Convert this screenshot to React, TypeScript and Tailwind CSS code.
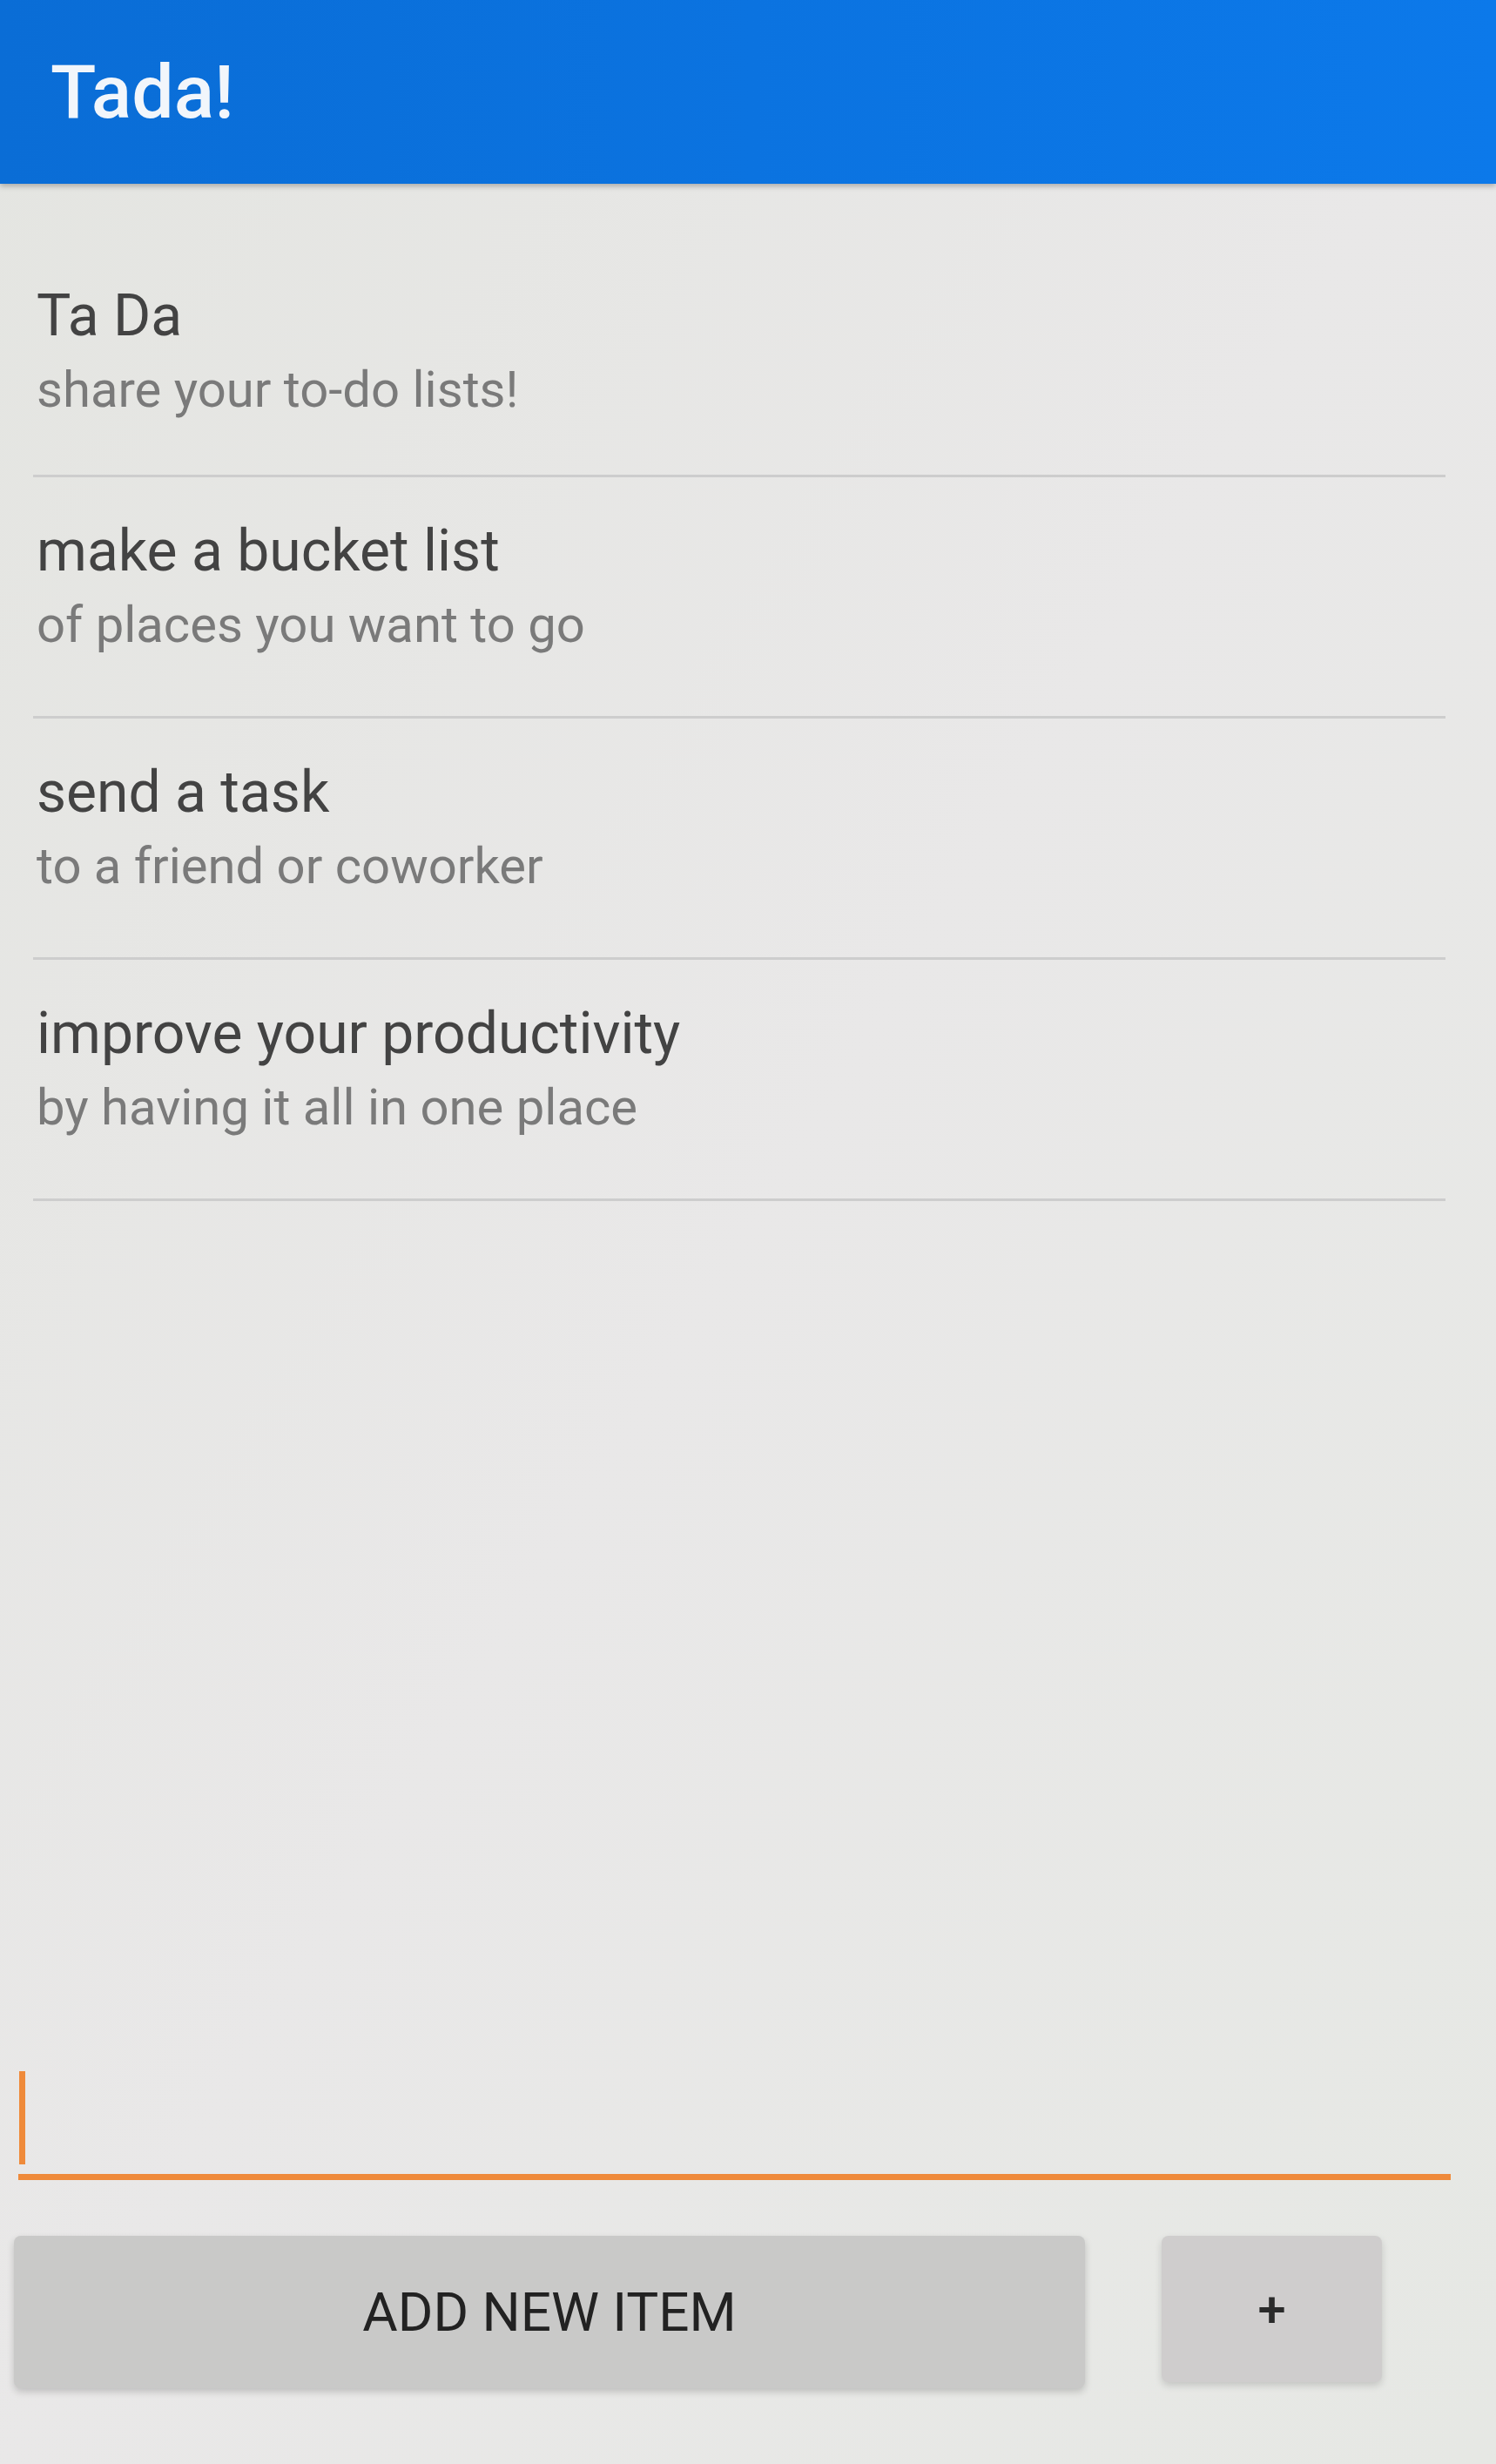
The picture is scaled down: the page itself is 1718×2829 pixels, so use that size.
import React from "react";

const items = [
    { title: "Ta Da", subtitle: "share your to-do lists!" },
    { title: "make a bucket list", subtitle: "of places you want to go" },
    { title: "send a task", subtitle: "to a friend or coworker" },
    { title: "improve your productivity", subtitle: "by having it all in one place" },
];

function ListItem({ title, subtitle, first }: { title: string; subtitle: string; first: boolean }) {
    return (
        <div>
            <div className={first ? "pl-[42px] pt-[41px] pb-[58px]" : "pl-[42px] pt-[41px] pb-[65px]"}>
                <p className="text-[66px] leading-[88px] text-[#434343]">{title}</p>
                <p className="text-[58px] leading-[80px] text-[#7a7a7a]">{subtitle}</p>
            </div>
            <div className="ml-[38px] mr-[58px] h-[3px] bg-[#cdcdcd]" />
        </div>
    );
}

export default function App() {
    return (
        <div
            className="flex h-[2829px] w-[1718px] flex-col bg-gradient-to-br from-[#e4e5e1] via-[#e9e8e8] to-[#e6e8e4]"
            style={{ fontFamily: "Roboto, 'Noto Sans', sans-serif" }}
        >
            <header className="relative z-10 flex h-[211px] items-center bg-gradient-to-r from-[#0a6dd6] to-[#0c79ea] pl-[58px] shadow-[0_3px_6px_rgba(0,0,0,0.25)]">
                <h1 className="text-[86px] font-medium leading-none text-[#f2f6fb]">Tada!</h1>
            </header>

            <div className="pt-[67px]">
                {items.map((item, index) => (
                    <ListItem
                        key={item.title}
                        title={item.title}
                        subtitle={item.subtitle}
                        first={index === 0}
                    />
                ))}
            </div>

            <div className="flex-1" />

            <div className="ml-[21px] mr-[52px]">
                <div className="ml-[1px] h-[107px] w-[7px] bg-[#ef8a3a]" />
                <div className="mt-[11px] h-[7px] bg-[#ef8a3a]" />
            </div>

            <div className="mt-[64px] flex items-start gap-[88px] pb-[87px] pl-[16px]">
                <button className="flex h-[175px] w-[1230px] items-center justify-center rounded-[8px] bg-[#c9c9c8] text-[62px] uppercase text-[#222] shadow-[0_4px_8px_rgba(0,0,0,0.18)]">
                    Add new item
                </button>
                <button className="flex h-[168px] w-[253px] items-center justify-center rounded-[8px] bg-[#cfcdcd] text-[58px] font-medium text-[#2a2a2a] shadow-[0_4px_8px_rgba(0,0,0,0.15)]">
                    +
                </button>
            </div>
        </div>
    );
}
